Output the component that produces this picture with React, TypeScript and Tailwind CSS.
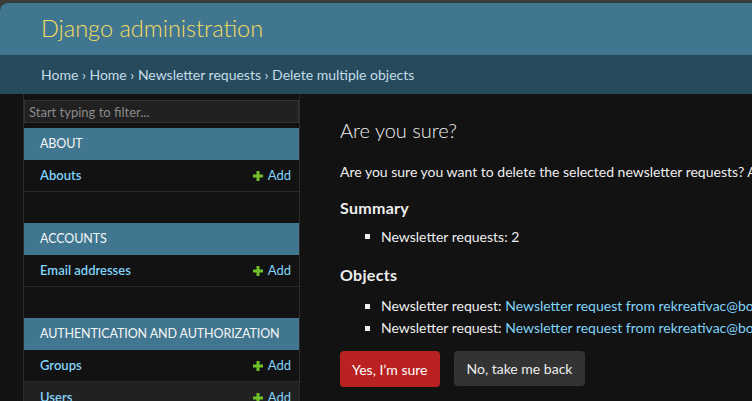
import * as React from "react";

const font = { fontFamily: '"Lato", "Liberation Sans", sans-serif' };

function AddLink() {
    return (
        <a className="flex items-center gap-[5px] text-[#81d4fa] text-[13px]">
            <svg width="10" height="10" viewBox="0 0 10 10">
                <path d="M3.5 0h3v3.5H10v3H6.5V10h-3V6.5H0v-3h3.5z" fill="#70bf2b" />
            </svg>
            <span>Add</span>
        </a>
    );
}

function Module(props: { title: string; rows: string[]; last?: boolean }) {
    return (
        <div className={props.last ? "" : "mb-[31px]"}>
            <div className="h-[32px] bg-[#417690] text-[#f5f5f5] text-[12.5px] tracking-[-0.1px] px-[16px] flex items-center whitespace-nowrap">
                {props.title}
            </div>
            {props.rows.map((r, i) => (
                <div key={r} className={"h-[32px] flex items-center justify-between pl-[16px] pr-[8px] border-b border-[#2a2a2a] " + (i == 1 ? "bg-[#212121]" : "")}>
                    <a className="text-[#81d4fa] text-[13px] font-semibold">{r}</a>
                    <AddLink />
                </div>
            ))}
        </div>
    );
}

export default function App() {
    return (
        <div className="w-[752px] h-[401px] bg-[#3b3b3b] pt-[3px] overflow-hidden" style={font}>
            <div className="flex flex-col h-full rounded-tl-[8px] overflow-hidden bg-[#121212]">
                <div className="h-[52px] shrink-0 bg-[#417690] px-[41px] flex items-center">
                    <h1 className="text-[23.5px] font-light text-[#f5dd5d]">Django administration</h1>
                </div>
                <div className="h-[39px] shrink-0 bg-[#264b5d] px-[41px] flex items-center text-[14px] text-[#c4dce8]">
                    <a>Home</a>&nbsp;›&nbsp;<a>Home</a>&nbsp;›&nbsp;<a>Newsletter requests</a>&nbsp;›&nbsp;Delete multiple objects
                </div>
                <div className="flex flex-1 min-h-0">
                    <div className="w-[24px] shrink-0 border-r border-[#2c2c2c]" />
                    <div className="w-[276px] shrink-0 border-r border-[#2c2c2c] pt-[6px]">
                        <input
                            className="block w-full h-[23px] bg-[#212121] border border-[#333] px-[4px] text-[13px] text-[#eee] placeholder:text-[#8a8a8a] outline-none"
                            placeholder="Start typing to filter..."
                        />
                        <div className="mt-[5px]">
                            <Module title="ABOUT" rows={["Abouts"]} />
                            <Module title="ACCOUNTS" rows={["Email addresses"]} />
                            <Module title="AUTHENTICATION AND AUTHORIZATION" rows={["Groups", "Users"]} last />
                        </div>
                    </div>
                    <div className="flex-1 min-w-0 overflow-hidden pl-[40px] pt-[24px] text-[#eeeeee] whitespace-nowrap">
                        <h1 className="text-[20px] font-light leading-[24px]">Are you sure?</h1>
                        <p className="text-[14px] mt-[19px]">
                            Are you sure you want to delete the selected newsletter requests? All of the following objects and their related items will be deleted:
                        </p>
                        <h2 className="text-[16px] font-bold tracking-[0.3px] mt-[14px]">Summary</h2>
                        <ul className="mt-[6px] pl-[25px] text-[14px]">
                            <li className="flex items-center gap-[11px]">
                                <span className="w-[5px] h-[5px] shrink-0 bg-[#eeeeee]" />
                                Newsletter requests: 2
                            </li>
                        </ul>
                        <h2 className="text-[16px] font-bold tracking-[0.3px] mt-[16px]">Objects</h2>
                        <ul className="mt-[9px] pl-[25px] text-[14px] leading-[20px] flex flex-col gap-[2px]">
                            {[0, 1].map((i) => (
                                <li key={i} className="flex items-center gap-[11px]">
                                    <span className="w-[5px] h-[5px] shrink-0 bg-[#eeeeee]" />
                                    <span>
                                        Newsletter request: <a className="text-[#81d4fa]">Newsletter request from rekreativac@booboo.com</a>
                                    </span>
                                </li>
                            ))}
                        </ul>
                        <div className="flex gap-[14px] mt-[13px]">
                            <button className="h-[36px] px-[12px] rounded-[4px] bg-[#ba2121] text-white text-[14px]">Yes, I’m sure</button>
                            <button className="h-[35px] px-[13px] rounded-[4px] bg-[#333333] text-[#eeeeee] text-[14px]">No, take me back</button>
                        </div>
                    </div>
                </div>
            </div>
        </div>
    );
}
